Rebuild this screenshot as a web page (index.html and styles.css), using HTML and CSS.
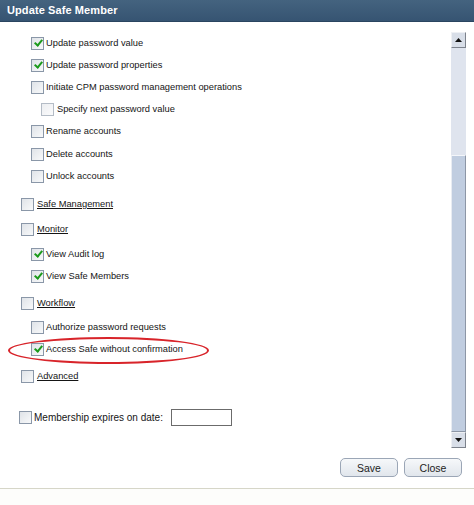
FILE: index.html
```html
<!DOCTYPE html>
<html>
<head>
<meta charset="utf-8">
<link rel="stylesheet" href="styles.css">
</head>
<body>
<div class="dialog">
  <div class="titlebar">Update Safe Member</div>
  <div class="body">
    <div class="list">
      <div class="row sub"><span class="cb on"></span><span class="lbl">Update password value</span></div>
      <div class="row sub"><span class="cb on"></span><span class="lbl">Update password properties</span></div>
      <div class="row sub"><span class="cb"></span><span class="lbl">Initiate CPM password management operations</span></div>
      <div class="row subsub"><span class="cb dim"></span><span class="lbl">Specify next password value</span></div>
      <div class="row sub"><span class="cb"></span><span class="lbl">Rename accounts</span></div>
      <div class="row sub g1"><span class="cb"></span><span class="lbl">Delete accounts</span></div>
      <div class="row sub"><span class="cb"></span><span class="lbl">Unlock accounts</span></div>
      <div class="row top g6"><span class="cb"></span><span class="lbl u">Safe Management</span></div>
      <div class="row top g3"><span class="cb"></span><span class="lbl u">Monitor</span></div>
      <div class="row sub g3"><span class="cb on"></span><span class="lbl">View Audit log</span></div>
      <div class="row sub"><span class="cb on"></span><span class="lbl">View Safe Members</span></div>
      <div class="row top g5"><span class="cb"></span><span class="lbl u">Workflow</span></div>
      <div class="row sub g2"><span class="cb"></span><span class="lbl">Authorize password requests</span></div>
      <div class="row sub"><span class="cb on"></span><span class="lbl">Access Safe without confirmation</span></div>
      <div class="row top g5"><span class="cb"></span><span class="lbl u">Advanced</span></div>
      <div class="row member"><span class="cb"></span><span class="lbl arial">Membership expires on date:</span><span class="datebox"></span></div>
    </div>
    <div class="scrollbar">
      <div class="sb-btn"><svg width="7" height="4" viewBox="0 0 7 4"><path d="M0 4 L3.5 0 L7 4 Z" fill="#111"/></svg></div>
      <div class="sb-track"></div>
      <div class="sb-thumb"></div>
      <div class="sb-btn"><svg width="7" height="4" viewBox="0 0 7 4"><path d="M0 0 L7 0 L3.5 4 Z" fill="#111"/></svg></div>
    </div>
  </div>
  <div class="actions">
    <button class="btn">Save</button>
    <button class="btn">Close</button>
  </div>
  <div class="footer"></div>
  <div class="ellipse"></div>
</div>
</body>
</html>
```
FILE: styles.css
```css
html, body {
  margin: 0;
  padding: 0;
  background: #ffffff;
}
.dialog {
  position: relative;
  width: 474px;
  height: 505px;
  display: flex;
  flex-direction: column;
  font-family: "Liberation Sans", Arial, sans-serif;
  color: #151515;
  overflow: hidden;
}
.titlebar {
  height: 22px;
  box-sizing: border-box;
  padding: 4px 0 0 7px;
  background: linear-gradient(#44637f, #365472);
  border-bottom: 1px solid #2a4560;
  color: #ffffff;
  font-weight: bold;
  font-size: 11px;
  letter-spacing: 0.1px;
}
.body {
  height: 428px;
  display: flex;
}
.list {
  flex: 1;
  padding-top: 10px;
  display: flex;
  flex-direction: column;
}
.row {
  height: 22px;
  display: flex;
  align-items: center;
  font-size: 9.3px;
}
.row.sub { padding-left: 31px; }
.row.subsub { padding-left: 41px; }
.row.top { padding-left: 21px; }
.row.sub .cb { margin-right: 2px; }
.row.subsub .cb { margin-right: 3px; }
.row.top .cb { margin-right: 3px; }
.g1 { margin-top: 1px; }
.g2 { margin-top: 2px; }
.g3 { margin-top: 3px; }
.g5 { margin-top: 5px; }
.g6 { margin-top: 6px; }
.row.member {
  margin-top: 19px;
  padding-left: 19px;
  font-size: 10px;
}
.row.member .cb { margin-right: 2px; }
.u { text-decoration: underline; }
.cb {
  width: 11px;
  height: 11px;
  border: 1px solid #8a97a8;
  background: linear-gradient(135deg, #dfe3e8, #f8f9fa);
  display: inline-block;
  position: relative;
  flex: none;
}
.cb.dim {
  border-color: #b4bcc6;
  background: linear-gradient(135deg, #eceef1, #fbfbfc);
}
.cb.on::after {
  content: "";
  position: absolute;
  width: 3px;
  height: 6px;
  border-right: 2px solid #1c9a1c;
  border-bottom: 2px solid #1c9a1c;
  transform: rotate(40deg);
  left: 3.5px;
  top: 0.5px;
}
.datebox {
  width: 59px;
  height: 15px;
  border: 1px solid #6b6b6b;
  margin-left: 8px;
  background: #fff;
}
.scrollbar {
  width: 15px;
  margin: 10px 8px 0 0;
  height: 416px;
  display: flex;
  flex-direction: column;
}
.sb-btn {
  height: 14px;
  border: 1px solid;
  border-color: #eef0f4 #7c828c #7c828c #eef0f4;
  background: #d8dee8;
  display: flex;
  align-items: center;
  justify-content: center;
  flex: none;
}
.sb-track {
  height: 107px;
  background: #dfe4ee;
  flex: none;
}
.sb-thumb {
  flex: 1;
  background: #c0cde0;
  border-top: 1px solid #f4f6fa;
  border-left: 1px solid #e8ecf2;
  border-right: 1px solid #8c96a6;
  border-bottom: 1px solid #8c96a6;
}
.actions {
  height: 38px;
  box-sizing: border-box;
  padding: 8px 12px 0 0;
  display: flex;
  justify-content: flex-end;
  gap: 6px;
}
.btn {
  width: 58px;
  height: 19px;
  padding: 0;
  border: 1px solid #9ba6b6;
  border-radius: 5px;
  background: linear-gradient(#f6f8fa, #e1e6ec);
  font-family: "Liberation Sans", Arial, sans-serif;
  font-size: 10.5px;
  color: #1e1e1e;
}
.footer {
  flex: 1;
  border-top: 1px solid #d6d6c8;
  background: #fdfdfb;
}
.ellipse {
  position: absolute;
  left: 8px;
  top: 337px;
  width: 197px;
  height: 23px;
  border: 2px solid #d8242a;
  border-radius: 50%;
  pointer-events: none;
}
```
